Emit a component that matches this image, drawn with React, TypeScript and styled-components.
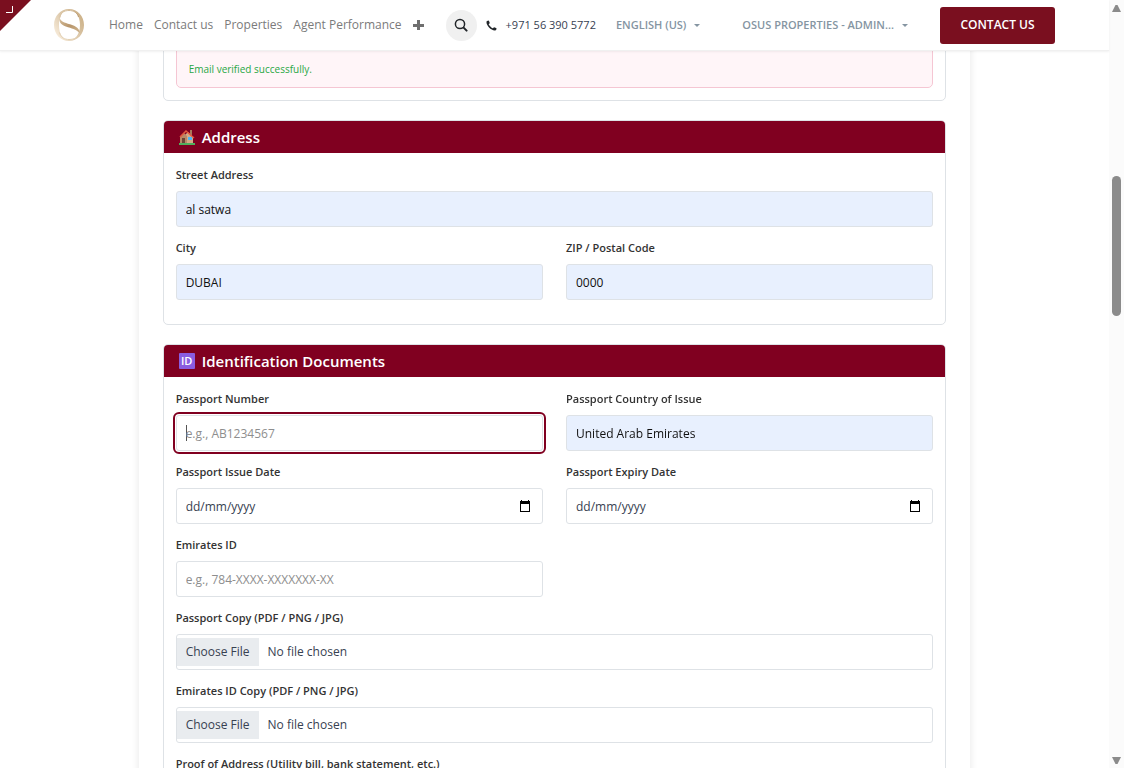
import React from 'react'
import styled, { createGlobalStyle } from 'styled-components'

const GlobalStyle = createGlobalStyle`
    *, *::before, *::after {
        box-sizing: border-box;
    }
    body {
        margin: 0;
        background: #fff;
        color: #374151;
        font: 400 12px/20px "Open Sans", "Noto Sans", sans-serif;
    }
    input, button, select {
        font-family: inherit;
    }
`

const Screen = styled.div`
    display: flex;
    height: 100vh;
    overflow: hidden;
`

const Content = styled.div`
    position: relative;
    flex: 1;
    min-width: 0;
`

const NavBar = styled.header`
    position: absolute;
    top: 0;
    left: 0;
    right: 0;
    z-index: 2;
    display: flex;
    align-items: center;
    height: 51px;
    padding: 0 54px 0 53px;
    background: #fff;
    border-bottom: 1px solid #f0f0f0;
    box-shadow: 0 1px 2px rgba(0, 0, 0, 0.06);
`

const Corner = styled.button`
    position: absolute;
    top: 0;
    left: 0;
    width: 31px;
    height: 31px;
    padding: 0;
    border: 0;
    background: none;
    cursor: pointer;
    svg {
        display: block;
    }
`

const LogoLink = styled.a`
    display: block;
    height: 34px;
    margin-right: 24px;
`

const Menu = styled.nav`
    display: flex;
    align-items: center;
    gap: 11px;
`

const MenuLink = styled.a`
    color: #7b7b7b;
    font-size: 12px;
    text-decoration: none;
    white-space: nowrap;
    &:hover {
        color: #7a0f1f;
    }
`

const PlusButton = styled.button`
    display: flex;
    padding: 0;
    border: 0;
    background: none;
    cursor: pointer;
`

const SearchButton = styled.button`
    display: flex;
    align-items: center;
    justify-content: center;
    flex: none;
    width: 31px;
    height: 31px;
    margin-left: 22px;
    padding: 0;
    border: 0;
    border-radius: 50%;
    background: #f0f0f0;
    cursor: pointer;
`

const Phone = styled.a`
    display: flex;
    align-items: center;
    gap: 9px;
    margin-left: 9px;
    color: #374151;
    font-size: 11px;
    text-decoration: none;
    white-space: nowrap;
`

const Dropdown = styled.button<{ $gap: number }>`
    display: flex;
    align-items: center;
    gap: 8px;
    margin-left: ${p => p.$gap}px;
    padding: 0;
    border: 0;
    background: none;
    color: #8595a2;
    font-size: 11px;
    font-weight: 600;
    line-height: 20px;
    white-space: nowrap;
    cursor: pointer;
    &::after {
        content: '';
        border: 3px solid transparent;
        border-top-color: #8595a2;
        border-bottom: 0;
    }
`

const ContactButton = styled.a`
    display: flex;
    align-items: center;
    justify-content: center;
    width: 115px;
    height: 37px;
    margin-left: auto;
    border-radius: 3px;
    background: #7a0f1f;
    color: #fff;
    font-size: 12px;
    font-weight: 600;
    text-decoration: none;
    white-space: nowrap;
`

const Sheet = styled.main`
    width: 75%;
    margin: 0 auto;
    padding: 0 24px;
    background: #fff;
    box-shadow: 0 0 8px rgba(0, 0, 0, 0.1);
`

const Card = styled.section`
    margin-bottom: 19px;
    border: 1px solid #dee2e6;
    border-radius: 5px;
    background: #fff;
    overflow: hidden;
`

const CardTitle = styled.h2`
    display: flex;
    align-items: center;
    gap: 7px;
    height: 32px;
    margin: 0;
    padding: 0 15px;
    background: #800020;
    color: #fff;
    font-size: 15px;
    font-weight: 600;
`

const CardBody = styled.div`
    display: grid;
    grid-template-columns: 1fr 1fr;
    column-gap: 23px;
    row-gap: 11px;
    padding: 12px 12px 24px;
`

const VerifyBody = styled.div`
    padding: 31px 12px 12px;
`

const VerifyBox = styled.div`
    padding: 6px 12px 8px;
    border: 1px solid #f5c6d3;
    border-radius: 5px;
    background: #fff5f8;
`

const VerifyText = styled.p`
    margin: 0;
    color: #28a745;
    font-size: 10px;
    line-height: 20px;
`

const Field = styled.div<{ $wide?: boolean }>`
    display: flex;
    flex-direction: column;
    gap: 6px;
    grid-column: ${p => (p.$wide ? '1 / -1' : 'auto')};
`

const Label = styled.label`
    color: #333;
    font-size: 11px;
    font-weight: 600;
    line-height: 20px;
`

const Input = styled.input<{ $filled?: boolean }>`
    width: 100%;
    height: 36px;
    padding: 0 9px;
    border: 1px solid #dee2e6;
    border-radius: 3px;
    background: ${p => (p.$filled ? '#e8f0fe' : '#fff')};
    color: ${p => (p.$filled ? '#111' : '#374151')};
    font-size: 12px;
    &::placeholder {
        color: #8e8e8e;
        opacity: 1;
    }
    &:focus {
        outline: 2px solid #800020;
        outline-offset: 1px;
        caret-color: transparent;
        background: linear-gradient(#555, #555) 9px 50% / 1px 16px no-repeat #fff;
    }
`

const DateWrap = styled.div`
    display: flex;
    align-items: center;
    height: 36px;
    padding-right: 11px;
    border: 1px solid #dee2e6;
    border-radius: 3px;
`

const DateInput = styled.input`
    flex: 1;
    min-width: 0;
    padding: 0 9px;
    border: 0;
    outline: 0;
    background: none;
    font-size: 12px;
    &::placeholder {
        color: #374151;
        opacity: 1;
    }
`

const DateButton = styled.button`
    display: flex;
    padding: 0;
    border: 0;
    background: none;
    cursor: pointer;
`

const FileInput = styled.input`
    width: 100%;
    height: 36px;
    padding: 3px 0;
    border: 1px solid #dee2e6;
    border-radius: 3px;
    color: #374151;
    font-size: 12px;
    line-height: 28px;
    &::file-selector-button {
        height: 28px;
        margin: 0 9px 0 0;
        padding: 0 9px;
        border: 0;
        background: #e9ecef;
        color: #374151;
        font: inherit;
    }
`

const IdBadge = styled.span`
    display: flex;
    align-items: center;
    justify-content: center;
    width: 16px;
    height: 16px;
    border-radius: 1px;
    background: #8a5ce0;
    font-size: 11px;
    line-height: 16px;
`

const ScrollTrack = styled.div`
    display: flex;
    flex-direction: column;
    align-items: center;
    width: 15px;
    padding: 5px 0 4px;
    background: #fbfbfb;
`

const ScrollThumb = styled.div`
    width: 9px;
    height: 140px;
    margin: 163px 0 auto;
    border-radius: 5px;
    background: #8b8b8b;
`

const Logo: React.FC = () => (
    <svg width="32" height="34" viewBox="0 0 32 34" fill="none">
        <defs>
            <linearGradient id="ring" x1="1" y1="28" x2="31" y2="8" gradientUnits="userSpaceOnUse">
                <stop offset="0" stopColor="#fbf0e0" />
                <stop offset="0.5" stopColor="#dcc8aa" />
                <stop offset="1" stopColor="#ccb086" />
            </linearGradient>
            <linearGradient id="curve" x1="7" y1="8" x2="26" y2="28" gradientUnits="userSpaceOnUse">
                <stop offset="0" stopColor="#d8c2a0" />
                <stop offset="0.5" stopColor="#b8966c" />
                <stop offset="1" stopColor="#d3ba94" />
            </linearGradient>
        </defs>
        <path
            fill="url(#ring)"
            fillRule="evenodd"
            d="M16 1C7.500 1 1 8 1 17s6.500 16 15 16 15-7 15-16S24.500 1 16 1Zm0 1c6.500 0 11 6 11 15s-4.500 15-11 15S6 26 6 17 9.500 2 16 2Z"
        />
        <path stroke="url(#curve)" d="M25.500 9C24.500 4.500 20.500 2.500 16 2.500c-5 0-9 2.500-9 7" />
        <path stroke="#e3d0b2" d="M26.500 25c0 4-5 6.500-10.500 6.500-4.500 0-8-2-9.500-7" />
        <path
            fill="url(#curve)"
            d="M6.500 9c.5 4.500 5 5.500 10.500 7.300 6 2 10 4.200 10 9.700-2.500-4-6.500-5-12-6.700C9 17.500 5.500 15 6.500 9Z"
        />
    </svg>
)

const HouseIcon: React.FC = () => (
    <svg width="16" height="16" viewBox="0 0 16 16">
        <path fill="#a9795b" d="M11 1h2v6h-2z" />
        <path fill="#d5a987" d="M5 7l4-4 5 5v6H5z" />
        <path fill="#b98866" d="M1 8l4-4 3 3v7H1z" />
        <path fill="#6d4436" d="M3 9h3v5H3z" />
        <path fill="#4cb8f5" d="M9 8h4v3H9z" />
        <path fill="none" stroke="#e2583e" strokeWidth="1.500" d="M1 8 7 2l8 7" />
        <path fill="#4fb05c" d="M0 14h16v2H0z" />
    </svg>
)

const CalendarIcon: React.FC = () => (
    <svg width="12" height="12" viewBox="0 0 12 12">
        <path fill="#000" fillRule="evenodd" d="M2 0h1v1h6V0h1v1h1v11H1V1h1zm0 4v7h8V4z" />
    </svg>
)

interface TextFieldProps {
    id: string
    label: string
    value?: string
    placeholder?: string
    wide?: boolean
    autoFocus?: boolean
}

const TextField: React.FC<TextFieldProps> = ({ id, label, value, placeholder, wide, autoFocus }) => (
    <Field $wide={wide}>
        <Label htmlFor={id}>{label}</Label>
        <Input id={id} type="text" defaultValue={value} placeholder={placeholder} $filled={!!value} autoFocus={autoFocus} />
    </Field>
)

const DateField: React.FC<{ id: string; label: string }> = ({ id, label }) => (
    <Field>
        <Label htmlFor={id}>{label}</Label>
        <DateWrap>
            <DateInput id={id} type="text" placeholder="dd/mm/yyyy" />
            <DateButton type="button" aria-label="Show date picker"><CalendarIcon /></DateButton>
        </DateWrap>
    </Field>
)

const FileField: React.FC<{ id: string; label: string }> = ({ id, label }) => (
    <Field $wide>
        <Label htmlFor={id}>{label}</Label>
        <FileInput id={id} type="file" />
    </Field>
)

const Header: React.FC = () => (
    <NavBar>
        <Corner aria-label="Open menu">
            <svg width="31" height="31" viewBox="0 0 31 31" fill="none">
                <path fill="#7a0f1f" d="M0 0h31L0 31z" />
                <path stroke="#fff" d="M6 12.5h6.5V6" />
            </svg>
        </Corner>
        <LogoLink href="#" aria-label="OSUS Properties"><Logo /></LogoLink>
        <Menu>
            <MenuLink href="#">Home</MenuLink>
            <MenuLink href="#">Contact us</MenuLink>
            <MenuLink href="#">Properties</MenuLink>
            <MenuLink href="#">Agent Performance</MenuLink>
            <PlusButton aria-label="More">
                <svg width="11" height="11" viewBox="0 0 11 11">
                    <path fill="#6f6f6f" d="M4 0h3v4h4v3H7v3H4V7H0V4h4z" />
                </svg>
            </PlusButton>
        </Menu>
        <SearchButton aria-label="Search">
            <svg width="14" height="14" viewBox="0 0 14 14" fill="none" stroke="#212529" strokeLinecap="round">
                <circle cx="6" cy="6" r="4.6" strokeWidth="1.5" />
                <path strokeWidth="2" d="m9.6 9.6 3 3" />
            </svg>
        </SearchButton>
        <Phone href="tel:+971563905772">
            <svg width="11" height="11" viewBox="0 0 11 11">
                <path fill="#212529" d="M0.5 1.8C.6 1 1.5.5 2.4.4c.5 0 1.3 2 1.4 2.5 0 .4-1.1 1-1.1 1.4C3 5.300 5.600 8 6.700 8.300c.4 0 1-1.100 1.400-1.100.5.1 2.500.9 2.500 1.400-.1.900-.6 1.800-1.400 1.900C5.500 11 0 5.500.5 1.800Z" />
            </svg>
            +971 56 390 5772
        </Phone>
        <Dropdown $gap={20}>ENGLISH (US)</Dropdown>
        <Dropdown $gap={42}>OSUS PROPERTIES - ADMIN...</Dropdown>
        <ContactButton href="#">CONTACT US</ContactButton>
    </NavBar>
)

const App: React.FC = () => {
    return (
        <Screen>
            <GlobalStyle />
            <Content>
                <Header />
                <Sheet>
                    <Card>
                        <VerifyBody>
                            <VerifyBox>
                                <VerifyText>&nbsp;</VerifyText>
                                <VerifyText>Email verified successfully.</VerifyText>
                            </VerifyBox>
                        </VerifyBody>
                    </Card>
                    <Card>
                        <CardTitle><HouseIcon />Address</CardTitle>
                        <CardBody>
                            <TextField id="street" label="Street Address" value="al satwa" wide />
                            <TextField id="city" label="City" value="DUBAI" />
                            <TextField id="zip" label="ZIP / Postal Code" value="0000" />
                        </CardBody>
                    </Card>
                    <Card>
                        <CardTitle><IdBadge>ID</IdBadge>Identification Documents</CardTitle>
                        <CardBody>
                            <TextField id="passport" label="Passport Number" placeholder="e.g., AB1234567" autoFocus />
                            <TextField id="country" label="Passport Country of Issue" value="United Arab Emirates" />
                            <DateField id="issued" label="Passport Issue Date" />
                            <DateField id="expires" label="Passport Expiry Date" />
                            <TextField id="emirates" label="Emirates ID" placeholder="e.g., 784-XXXX-XXXXXXX-XX" />
                            <FileField id="passport-copy" label="Passport Copy (PDF / PNG / JPG)" />
                            <FileField id="emirates-copy" label="Emirates ID Copy (PDF / PNG / JPG)" />
                            <FileField id="address-proof" label="Proof of Address (Utility bill, bank statement, etc.)" />
                        </CardBody>
                    </Card>
                </Sheet>
            </Content>
            <ScrollTrack>
                <svg width="9" height="8" viewBox="0 0 9 8"><path fill="#8b8b8b" d="M3.500 0h2L9 7H0z" /></svg>
                <ScrollThumb />
                <svg width="9" height="8" viewBox="0 0 9 8"><path fill="#8b8b8b" d="M0 1h9L5.500 8h-2z" /></svg>
            </ScrollTrack>
        </Screen>
    )
}

export default App
